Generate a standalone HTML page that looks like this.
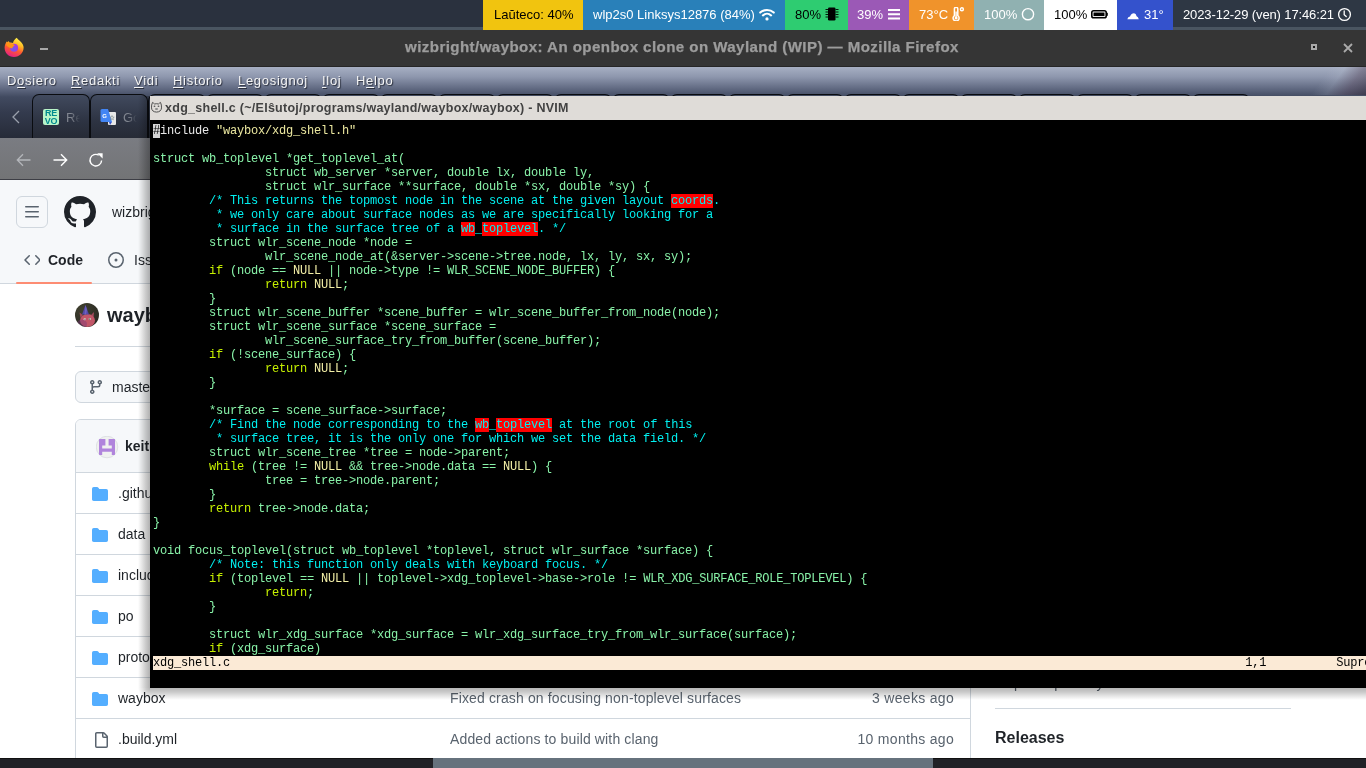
<!DOCTYPE html>
<html><head><meta charset="utf-8">
<style>
*{margin:0;padding:0;box-sizing:border-box}
html,body{width:1366px;height:768px;overflow:hidden;background:#2b3240;font-family:"Liberation Sans",sans-serif}
.a{position:absolute}
/* waybar */
#wb{left:0;top:0;width:1366px;height:30px;background:#2a313e;border-bottom:3px solid #4a5561}
.m{position:absolute;top:0;height:30px;font-size:13px;line-height:30px;white-space:nowrap}
/* firefox */
#fftitle{left:0;top:30px;width:1366px;height:37px;background:#353535;border-bottom:1px solid #262626}
#menubar{left:0;top:67px;width:1366px;height:71px;background:linear-gradient(#a7afc3 0px,#8d96ad 10px,#5f6880 22px,#414a60 30px,#343b4e 45px,#262b38 71px)}
.menu{position:absolute;top:73px;font-size:13px;letter-spacing:0.7px;color:#f4f4f4;text-shadow:1px 1px 1px #2a2f3c;white-space:nowrap}
.menu u{text-decoration:underline;text-underline-offset:2px}
.tab{position:absolute;top:94px;height:45px;width:58px;border:1.5px solid #0a0c10;border-bottom:none;border-radius:7px 7px 0 0;background:linear-gradient(#414a5e,#2d3342 60%,#262a35)}
#navbar{left:0;top:138px;width:1366px;height:42px;background:linear-gradient(#7a7c82,#737476);border-bottom:1px solid #3d3e45}
#page{left:0;top:180px;width:1366px;height:578px;background:#ffffff;overflow:hidden}
#bottom{left:0;top:758px;width:1366px;height:10px;background:#212227;border-top:1px solid #111}
/* terminal */
#term{left:150px;top:96px;width:1230px;height:592px;background:#000;}
#ttitle{left:0;top:0;width:1230px;height:24px;background:#dfdcd8}
#code{left:3px;top:28px;font-family:"Liberation Mono",monospace;font-size:12px;line-height:14px;letter-spacing:-0.2px;white-space:pre;color:#88f2a8}
.k{color:#c6f000}
.n{color:#f2eea6}
.c{color:#00f0f0}
.s{color:#ece8a0}
.w{color:#e8e8e8}
.r{background:#ff0000}
.cur{background:#d4d4d4;color:#000}
.row{position:absolute;left:0;width:894px;height:41px;border-top:1px solid #d0d7de}
.fn{left:42px;top:11px;font-size:14px;line-height:18px;color:#1f2328;white-space:nowrap}
.msg{left:374px;top:11px;font-size:14px;line-height:18px;color:#59636e;white-space:nowrap;letter-spacing:0.14px}
.age{right:16px;top:11px;font-size:14px;line-height:18px;color:#59636e;white-space:nowrap;letter-spacing:0.3px}
</style></head>
<body>
<div id="root" style="position:absolute;left:0;top:0;width:1366px;height:768px;will-change:transform;overflow:hidden">
<div id="wb" class="a">
<div class="m" style="left:483px;width:100px;background:#f1c40f;color:#000"><span class="a" style="left:11px">La&#365;teco: 40%</span></div>
<div class="m" style="left:583px;width:202px;background:#2980b9;color:#fff"><span class="a" style="left:10px">wlp2s0 Linksys12876 (84%)</span>
<svg class="a" style="left:176px;top:8px" width="16" height="13" viewBox="0 0 16 13"><path d="M1.2 4.6 A10 10 0 0 1 14.8 4.6" stroke="#fff" stroke-width="2.1" fill="none" stroke-linecap="round"/><path d="M3.9 7.4 A6 6 0 0 1 12.1 7.4" stroke="#fff" stroke-width="2.1" fill="none" stroke-linecap="round"/><circle cx="8" cy="10.9" r="1.6" fill="#fff"/></svg></div>
<div class="m" style="left:785px;width:63px;background:#2ecc71;color:#000"><span class="a" style="left:10px">80%</span>
<svg class="a" style="left:40px;top:7px" width="14" height="14" viewBox="0 0 14 14"><rect x="3" y="0.5" width="7.5" height="13" rx="1.3" fill="#000"/><path d="M0.5 2.5h2.5M0.5 5h2.5M0.5 7.5h2.5M0.5 10h2.5M10.5 2.5h3M10.5 5h3M10.5 7.5h3M10.5 10h3" stroke="#000" stroke-width="0.9"/></svg></div>
<div class="m" style="left:848px;width:61px;background:#9b59b6;color:#fff"><span class="a" style="left:9px">39%</span>
<svg class="a" style="left:40px;top:9px" width="12" height="11" viewBox="0 0 12 11"><path d="M0 1h12M0 5.3h12M0 9.6h12" stroke="#fff" stroke-width="2"/></svg></div>
<div class="m" style="left:909px;width:65px;background:#f0932b;color:#fff"><span class="a" style="left:10px">73&#176;C</span>
<svg class="a" style="left:41px;top:7px" width="15" height="14" viewBox="0 0 15 14"><path d="M4.4 2a1.7 1.7 0 0 1 3.4 0v6.6a3 3 0 1 1-3.4 0z" stroke="#fff" stroke-width="1.5" fill="none"/><circle cx="6.1" cy="10.9" r="1.5" fill="#fff"/><rect x="5.4" y="4.5" width="1.4" height="6" fill="#fff"/><circle cx="11.9" cy="2.3" r="1.5" stroke="#fff" stroke-width="1.4" fill="none"/></svg></div>
<div class="m" style="left:974px;width:70px;background:#90b1b1;color:#fff"><span class="a" style="left:10px">100%</span>
<svg class="a" style="left:47px;top:7px" width="14" height="14" viewBox="0 0 14 14"><circle cx="7" cy="7.2" r="5.6" stroke="#fff" stroke-width="1.4" fill="none"/></svg></div>
<div class="m" style="left:1044px;width:73px;background:#ffffff;color:#000"><span class="a" style="left:10px">100%</span>
<svg class="a" style="left:47px;top:10px" width="17" height="9" viewBox="0 0 17 9"><rect x="0.8" y="0.8" width="14.4" height="7" rx="1.8" stroke="#000" stroke-width="1.6" fill="none"/><rect x="2.5" y="2.5" width="11" height="3.6" fill="#000"/><rect x="15.4" y="2.8" width="1.4" height="3" fill="#000"/></svg></div>
<div class="m" style="left:1117px;width:56px;background:#3452cc;color:#fff">
<svg class="a" style="left:10px;top:12px" width="12" height="8" viewBox="0 0 12 8"><path d="M0.3 7.2Q1 4.8 3 4.6 4.5 1.2 7 1.3 9 1.5 9.6 4.2 11.2 4.6 11.8 7.2z" fill="#fff"/></svg>
<span class="a" style="left:27px">31&#176;</span></div>
<div class="m" style="left:1173px;width:193px;height:27px;background:#2e3744;color:#fff"><span class="a" style="left:10px;letter-spacing:-0.12px">2023-12-29 (ven) 17:46:21</span>
<svg class="a" style="left:164px;top:7px" width="15" height="15" viewBox="0 0 15 15"><circle cx="7.5" cy="7.5" r="5.9" stroke="#fff" stroke-width="1.3" fill="none"/><path d="M7.2 3.9v3.8l2 1.8" stroke="#fff" stroke-width="1.3" fill="none" stroke-linecap="round"/></svg></div>
</div>

<div id="fftitle" class="a">
<svg class="a" style="left:4px;top:7px" width="20" height="21" viewBox="0 0 20 21">
<defs><linearGradient id="fg1" x1="0.75" y1="0.05" x2="0.35" y2="1"><stop offset="0" stop-color="#fff04a"/><stop offset="0.3" stop-color="#ffbd24"/><stop offset="0.6" stop-color="#ff5a30"/><stop offset="1" stop-color="#e51e86"/></linearGradient>
<radialGradient id="fg2" cx="0.4" cy="0.65" r="0.6"><stop offset="0" stop-color="#6d5cf0"/><stop offset="1" stop-color="#a838e0"/></radialGradient></defs>
<path d="M12.7 0.7 C14 3 18.5 4.5 19.5 9.5 C20.3 15 16 20 10 20 C4.5 20 0.6 16 0.6 10.5 C0.6 8 1.8 5.6 3 4.2 L3.6 5.5 L4.6 4 L5.6 5.6 C6.8 5.3 8 5.5 9 6 C9.5 3.5 11 2 12.7 0.7z" fill="url(#fg1)"/>
<circle cx="10.1" cy="10.8" r="4" fill="url(#fg2)"/>
<path d="M2.6 5 C5 6 8 6.2 11 8.2 C9.6 8.8 8.6 9.8 8.3 11.4 C6 11.2 4 10 2.4 8.2z" fill="#ff9414"/>
</svg>
<div class="a" style="left:40px;top:18px;width:8px;height:2px;background:#a8a8a8"></div>
<div class="a" id="fft" style="left:405px;top:9px;font-weight:bold;font-size:14px;color:#9c9c9c;white-space:nowrap;letter-spacing:0.4px;transform:scaleX(1.077);transform-origin:0 0;-webkit-text-stroke:0.25px #9c9c9c">wizbright/waybox: An openbox clone on Wayland (WIP) &#8212; Mozilla Firefox</div>
<div class="a" style="left:1311px;top:14px;width:6px;height:6px;border:2px solid #aaa;background:#1a1a1a"></div>
<svg class="a" style="left:1343px;top:13px" width="10" height="10" viewBox="0 0 10 10"><path d="M1 1L9 9M9 1L1 9" stroke="#aaa" stroke-width="1.8"/></svg>
</div>
<div id="menubar" class="a">
<div class="a" style="left:1290px;top:0;width:76px;height:28px;background:linear-gradient(125deg,rgba(0,0,0,0) 42%,rgba(200,205,220,.14) 58%,rgba(85,68,88,.42) 78%,rgba(50,40,55,.52) 100%)"></div>
</div>
<div class="menu" style="left:7px">D<u>o</u>siero</div>
<div class="menu" style="left:71px"><u>R</u>edakti</div>
<div class="menu" style="left:134px"><u>V</u>idi</div>
<div class="menu" style="left:173px"><u>H</u>istorio</div>
<div class="menu" style="left:238px"><u>L</u>egosignoj</div>
<div class="menu" style="left:322px"><u>I</u>loj</div>
<div class="menu" style="left:356px">H<u>e</u>lpo</div>
<svg class="a" style="left:11px;top:110px" width="10" height="14" viewBox="0 0 10 14"><path d="M8 1L2 7l6 6" stroke="#9aa0ac" stroke-width="1.3" fill="none"/></svg>
<div class="tab" style="left:32px"></div><div class="tab" style="left:90px"></div><div class="tab" style="left:148px"></div><div class="tab" style="left:206px"></div><div class="tab" style="left:264px"></div><div class="tab" style="left:322px"></div><div class="tab" style="left:380px"></div><div class="tab" style="left:438px"></div><div class="tab" style="left:496px"></div><div class="tab" style="left:554px"></div><div class="tab" style="left:612px"></div><div class="tab" style="left:670px"></div><div class="tab" style="left:728px"></div><div class="tab" style="left:786px"></div><div class="tab" style="left:844px"></div><div class="tab" style="left:902px"></div><div class="tab" style="left:960px"></div><div class="tab" style="left:1018px"></div><div class="tab" style="left:1076px"></div><div class="tab" style="left:1134px"></div><div class="tab" style="left:1192px"></div>
<div class="a" style="left:43px;top:109px;width:16px;height:16px;background:#b9f5c9;border-radius:2px;font:bold 9px/8px 'Liberation Sans',sans-serif;color:#008a8f;text-align:center;letter-spacing:-0.3px;overflow:hidden">RE<br>VO</div>
<div class="a" style="left:66px;top:109px;font-size:13px;line-height:17px;color:#80858f;width:14px;overflow:hidden;white-space:nowrap;-webkit-mask-image:linear-gradient(90deg,#000 35%,transparent 100%)">Re</div>
<svg class="a" style="left:100px;top:109px" width="17" height="17" viewBox="0 0 17 17"><rect x="8" y="3" width="8" height="13" rx="1" fill="#e8e8e8"/><path d="M0.5 1.5Q0.5 0 2 0h6l4 13H2Q0.5 13 0.5 11.5z" fill="#4285f4"/><path d="M9 13l3 0-2 3z" fill="#3a55c8"/><text x="2.2" y="8.5" font-family="Liberation Sans" font-weight="bold" font-size="6" fill="#fff">G</text><path d="M12 6.5l.6 1.6 1.6.1-1.3 1 .5 1.6-1.4-.9-1.4.9.5-1.6-1.3-1 1.6-.1z" fill="none" stroke="#7a8a8a" stroke-width=".6"/></svg>
<div class="a" style="left:123px;top:109px;font-size:13px;line-height:17px;color:#80858f;width:14px;overflow:hidden;white-space:nowrap;-webkit-mask-image:linear-gradient(90deg,#000 35%,transparent 100%)">Go</div>
<div id="navbar" class="a">
<svg class="a" style="left:16px;top:15px" width="16" height="14" viewBox="0 0 16 14"><path d="M14.5 7H1.5M7 1.2L1.3 7 7 12.8" stroke="#b4b6ba" stroke-width="1.3" fill="none"/></svg>
<svg class="a" style="left:52px;top:15px" width="16" height="14" viewBox="0 0 16 14"><path d="M1.5 7h13M9 1.2L14.7 7 9 12.8" stroke="#fff" stroke-width="1.4" fill="none"/></svg>
<svg class="a" style="left:88px;top:14px" width="16" height="16" viewBox="0 0 16 16"><path d="M13.6 8.5A5.8 5.8 0 1 1 10.8 3.2" stroke="#fff" stroke-width="1.4" fill="none"/><path d="M9.2 1.2L14.6 1.2 14.6 6.6z" fill="#fff"/></svg>
</div>
<div id="page" class="a">
<div class="a" style="left:0;top:0;width:1366px;height:104px;background:#f6f8fa;border-bottom:1px solid #d0d7de"></div>
<div class="a" style="left:16px;top:16px;width:32px;height:32px;border:1px solid #d0d7de;border-radius:6px"></div>
<svg class="a" style="left:24px;top:24px" width="16" height="16" viewBox="0 0 16 16"><path fill="#59636e" d="M1 2.75A.75.75 0 0 1 1.75 2h12.5a.75.75 0 0 1 0 1.5H1.75A.75.75 0 0 1 1 2.75Zm0 5A.75.75 0 0 1 1.75 7h12.5a.75.75 0 0 1 0 1.5H1.75A.75.75 0 0 1 1 7.75ZM1.75 12h12.5a.75.75 0 0 1 0 1.5H1.75a.75.75 0 0 1 0-1.5Z"/></svg>
<svg class="a" style="left:64px;top:16px" width="32" height="32" viewBox="0 0 16 16"><path fill="#1f2328" d="M8 0c4.42 0 8 3.58 8 8a8.013 8.013 0 0 1-5.45 7.59c-.4.08-.55-.17-.55-.38 0-.27.01-1.13.01-2.2 0-.75-.25-1.23-.54-1.48 1.78-.2 3.65-.88 3.65-3.95 0-.88-.31-1.59-.82-2.15.08-.2.36-1.02-.08-2.12 0 0-.67-.22-2.2.82-.64-.18-1.32-.27-2-.27-.68 0-1.36.09-2 .27-1.53-1.03-2.2-.82-2.2-.82-.44 1.1-.16 1.92-.08 2.12-.51.56-.82 1.28-.82 2.15 0 3.06 1.86 3.75 3.64 3.95-.23.2-.44.55-.51 1.07-.46.21-1.61.55-2.33-.66-.15-.24-.6-.83-1.23-.82-.67.01-.27.38.01.53.34.19.73.9.82 1.13.16.45.68 1.31 2.69.94 0 .67.01 1.3.01 1.49 0 .21-.15.45-.55.38A7.995 7.995 0 0 1 0 8c0-4.42 3.58-8 8-8Z"/></svg>
<div class="a" style="left:112px;top:22px;font-size:14px;line-height:20px;color:#1f2328;white-space:nowrap">wizbright / waybox</div>
<svg class="a" style="left:24px;top:72px" width="16" height="16" viewBox="0 0 16 16"><path fill="#59636e" d="M4.72 3.22a.75.75 0 0 1 1.06 1.06L2.06 8l3.72 3.72a.75.75 0 1 1-1.06 1.06L.47 8.53a.75.75 0 0 1 0-1.06Zm6.56 0a.75.75 0 0 1 1.06 0l4.25 4.25a.75.75 0 0 1 0 1.06l-4.25 4.25a.75.75 0 0 1-1.06-1.06L14.94 8l-3.72-3.72a.75.75 0 0 1 0-1.06Z"/></svg>
<div class="a" style="left:48px;top:71px;font-weight:bold;font-size:14px;line-height:18px;color:#1f2328">Code</div>
<div class="a" style="left:16px;top:102px;width:76px;height:2px;background:#fd8c73;border-radius:1px"></div>
<svg class="a" style="left:108px;top:72px" width="16" height="16" viewBox="0 0 16 16"><path fill="#59636e" d="M8 9.5a1.5 1.5 0 1 0 0-3 1.5 1.5 0 0 0 0 3Z"/><path fill="#59636e" d="M8 0a8 8 0 1 1 0 16A8 8 0 0 1 8 0ZM1.5 8a6.5 6.5 0 1 0 13 0 6.5 6.5 0 0 0-13 0Z"/></svg>
<div class="a" style="left:134px;top:71px;font-size:14px;line-height:18px;color:#1f2328">Issues</div>
<svg class="a" style="left:75px;top:123px" width="24" height="24" viewBox="0 0 24 24"><defs><clipPath id="avc"><circle cx="12" cy="12" r="12"/></clipPath><radialGradient id="avg" cx="0.3" cy="0.3" r="0.8"><stop offset="0" stop-color="#40402f"/><stop offset="1" stop-color="#2a2a22"/></radialGradient></defs><g clip-path="url(#avc)"><rect width="24" height="24" fill="url(#avg)"/><path d="M4.5 9.5 L8 12 L5.5 15z M19 9 L16 12 L18.5 15z" fill="#a04a5a"/><ellipse cx="12.5" cy="17.5" rx="7.5" ry="6.5" fill="#c25668"/><ellipse cx="7" cy="21" rx="5" ry="4.5" fill="#7c3a78" opacity=".45"/><path d="M10.5 2 L14 11.5 L7 11.5z" fill="#5548a8"/><path d="M10.5 2 L12 7 L11 11.5 L9.5 11.5z" fill="#6d62c0"/><ellipse cx="9.8" cy="16.2" rx="1.3" ry="1" fill="#e8e4d8"/><ellipse cx="14.8" cy="16" rx="1.2" ry="1" fill="#c8dcc0"/><circle cx="10" cy="16.3" r=".5" fill="#222"/><circle cx="14.6" cy="16.1" r=".5" fill="#222"/></g></svg>
<div class="a" style="left:107px;top:122px;font-weight:bold;font-size:20px;line-height:26px;color:#1f2328">waybox</div>
<div class="a" style="left:75px;top:166px;width:1216px;height:1px;background:#d0d7de"></div>
<div class="a" style="left:75px;top:191px;width:110px;height:32px;border:1px solid #d0d7de;border-radius:6px;background:#f6f8fa"></div>
<svg class="a" style="left:88px;top:199px" width="16" height="16" viewBox="0 0 16 16"><path fill="#59636e" d="M9.5 3.25a2.25 2.25 0 1 1 3 2.122V6A2.5 2.5 0 0 1 10 8.5H6a1 1 0 0 0-1 1v1.128a2.251 2.251 0 1 1-1.5 0V5.372a2.25 2.25 0 1 1 1.5 0v1.836A2.493 2.493 0 0 1 6 7h4a1 1 0 0 0 1-1v-.628A2.25 2.25 0 0 1 9.5 3.25Zm-6 0a.75.75 0 1 0 1.5 0 .75.75 0 0 0-1.5 0Zm8.25-.75a.75.75 0 1 0 0 1.5.75.75 0 0 0 0-1.5ZM4.25 12a.75.75 0 1 0 0 1.5.75.75 0 0 0 0-1.5Z"/></svg>
<div class="a" style="left:112px;top:198px;font-size:14px;line-height:18px;color:#1f2328">master</div>
<div class="a" style="left:75px;top:239px;width:896px;height:340px;border:1px solid #d0d7de;border-radius:6px 6px 0 0;overflow:hidden">
 <div class="a" style="left:0;top:0;width:894px;height:53px;background:#f6f8fa;border-bottom:1px solid #d0d7de"></div>
 <svg class="a" style="left:20px;top:16px" width="23" height="23" viewBox="0 0 23 23"><defs><clipPath id="kc"><circle cx="11" cy="11" r="11"/></clipPath></defs><circle cx="11" cy="11" r="10.8" fill="#f0f1f0" stroke="#d0d4d8" stroke-width="0.6"/><g clip-path="url(#kc)" fill="#b084dc"><path d="M3 3h6.4v6.4H6.2v3.2h9.6V9.4h-3.2V3H19v16h-3.2v-3.2H6.2V19H3z"/></g></svg>
 <div class="a" style="left:49px;top:17px;font-weight:bold;font-size:14px;line-height:18px;color:#1f2328">keithbowes</div>
 <div class="row" style="top:52px"><svg class="a" style="left:16px;top:13px" width="16" height="16" viewBox="0 0 16 16"><path fill="#54aeff" d="M1.75 1A1.75 1.75 0 0 0 0 2.75v10.5C0 14.216.784 15 1.75 15h12.5A1.75 1.75 0 0 0 16 13.25v-8.5A1.75 1.75 0 0 0 14.25 3H7.5a.25.25 0 0 1-.2-.1l-.9-1.2C6.07 1.26 5.55 1 5 1H1.75Z"/></svg><span class="a fn">.github</span><span class="a msg"></span><span class="a age"></span></div>
<div class="row" style="top:93px"><svg class="a" style="left:16px;top:13px" width="16" height="16" viewBox="0 0 16 16"><path fill="#54aeff" d="M1.75 1A1.75 1.75 0 0 0 0 2.75v10.5C0 14.216.784 15 1.75 15h12.5A1.75 1.75 0 0 0 16 13.25v-8.5A1.75 1.75 0 0 0 14.25 3H7.5a.25.25 0 0 1-.2-.1l-.9-1.2C6.07 1.26 5.55 1 5 1H1.75Z"/></svg><span class="a fn">data</span><span class="a msg"></span><span class="a age"></span></div>
<div class="row" style="top:134px"><svg class="a" style="left:16px;top:13px" width="16" height="16" viewBox="0 0 16 16"><path fill="#54aeff" d="M1.75 1A1.75 1.75 0 0 0 0 2.75v10.5C0 14.216.784 15 1.75 15h12.5A1.75 1.75 0 0 0 16 13.25v-8.5A1.75 1.75 0 0 0 14.25 3H7.5a.25.25 0 0 1-.2-.1l-.9-1.2C6.07 1.26 5.55 1 5 1H1.75Z"/></svg><span class="a fn">include</span><span class="a msg"></span><span class="a age"></span></div>
<div class="row" style="top:175px"><svg class="a" style="left:16px;top:13px" width="16" height="16" viewBox="0 0 16 16"><path fill="#54aeff" d="M1.75 1A1.75 1.75 0 0 0 0 2.75v10.5C0 14.216.784 15 1.75 15h12.5A1.75 1.75 0 0 0 16 13.25v-8.5A1.75 1.75 0 0 0 14.25 3H7.5a.25.25 0 0 1-.2-.1l-.9-1.2C6.07 1.26 5.55 1 5 1H1.75Z"/></svg><span class="a fn">po</span><span class="a msg"></span><span class="a age"></span></div>
<div class="row" style="top:216px"><svg class="a" style="left:16px;top:13px" width="16" height="16" viewBox="0 0 16 16"><path fill="#54aeff" d="M1.75 1A1.75 1.75 0 0 0 0 2.75v10.5C0 14.216.784 15 1.75 15h12.5A1.75 1.75 0 0 0 16 13.25v-8.5A1.75 1.75 0 0 0 14.25 3H7.5a.25.25 0 0 1-.2-.1l-.9-1.2C6.07 1.26 5.55 1 5 1H1.75Z"/></svg><span class="a fn">protocol</span><span class="a msg"></span><span class="a age"></span></div>
<div class="row" style="top:257px"><svg class="a" style="left:16px;top:13px" width="16" height="16" viewBox="0 0 16 16"><path fill="#54aeff" d="M1.75 1A1.75 1.75 0 0 0 0 2.75v10.5C0 14.216.784 15 1.75 15h12.5A1.75 1.75 0 0 0 16 13.25v-8.5A1.75 1.75 0 0 0 14.25 3H7.5a.25.25 0 0 1-.2-.1l-.9-1.2C6.07 1.26 5.55 1 5 1H1.75Z"/></svg><span class="a fn">waybox</span><span class="a msg">Fixed crash on focusing non-toplevel surfaces</span><span class="a age">3 weeks ago</span></div>
<div class="row" style="top:298px"><svg class="a" style="left:17px;top:13px" width="16" height="16" viewBox="0 0 16 16"><path fill="#59636e" d="M2 1.75C2 .784 2.784 0 3.75 0h6.586c.464 0 .909.184 1.237.513l2.914 2.914c.329.328.513.773.513 1.237v9.586A1.75 1.75 0 0 1 13.25 16h-9.5A1.75 1.75 0 0 1 2 14.25Zm1.75-.25a.25.25 0 0 0-.25.25v12.5c0 .138.112.25.25.25h9.5a.25.25 0 0 0 .25-.25V6h-2.75A1.75 1.75 0 0 1 9 4.25V1.5Zm6.75.062V4.25c0 .138.112.25.25.25h2.688l-.011-.013-2.914-2.914-.013-.011Z"/></svg><span class="a fn">.build.yml</span><span class="a msg">Added actions to build with clang</span><span class="a age">10 months ago</span></div>

</div>
<div class="a" style="left:996px;top:495px;font-size:14px;line-height:16px;color:#59636e">Report repository</div>
<div class="a" style="left:995px;top:528px;width:296px;height:1px;background:#d0d7de"></div>
<div class="a" style="left:995px;top:548px;font-weight:bold;font-size:16px;line-height:20px;color:#1f2328">Releases</div>
</div>
<div id="bottom" class="a"><div class="a" style="left:433px;top:-1px;width:500px;height:11px;background:#66727d"></div></div>

<div class="a" style="left:138px;top:96px;width:12px;height:592px;background:linear-gradient(90deg,rgba(0,0,0,0) 0,rgba(0,0,0,.1) 4px,rgba(0,0,0,.21) 8px,rgba(0,0,0,.31) 12px)"></div>
<div class="a" style="left:150px;top:688px;width:1216px;height:12px;background:linear-gradient(rgba(0,0,0,.29) 0,rgba(0,0,0,.21) 4px,rgba(0,0,0,.1) 8px,rgba(0,0,0,0) 12px)"></div>
<div class="a" style="left:138px;top:688px;width:12px;height:12px;background:radial-gradient(circle at 100% 0,rgba(0,0,0,.29) 0,rgba(0,0,0,.2) 4px,rgba(0,0,0,.09) 8px,rgba(0,0,0,0) 12px)"></div>
<div id="term" class="a">
  <div id="ttitle" class="a">
<svg class="a" style="left:1px;top:5px" width="12" height="12" viewBox="0 0 12 12"><path d="M1.5 1.4 Q2.9 2.3 3.6 3 Q5.5 2.4 7.4 3 Q8.1 2.3 9.5 1.4 Q10.7 4 10.5 6.9 Q10.1 10.9 5.5 11.1 Q.9 10.9 .5 6.9 Q.3 4 1.5 1.4z" fill="none" stroke="#505050" stroke-width="1"/><ellipse cx="3.5" cy="5.3" rx=".9" ry=".8" fill="#555"/><ellipse cx="7.5" cy="5.3" rx=".9" ry=".8" fill="#555"/><ellipse cx="5.5" cy="8" rx="1.6" ry="1.1" fill="#8a8a8a"/></svg>
<div class="a" style="left:15px;top:4px;font-weight:bold;font-size:12.5px;line-height:16px;color:#424242;white-space:nowrap;letter-spacing:0.27px">xdg_shell.c (~/El&#349;utoj/programs/wayland/waybox/waybox) - NVIM</div>
</div>
<div id="status" class="a" style="left:3px;top:560px;width:1240px;height:14px;background:#fbead6;color:#000;font-family:'Liberation Mono',monospace;font-size:12px;line-height:14px;letter-spacing:-0.2px;white-space:pre">xdg_shell.c                                                                                                                                                 1,1          Supro</div>
  <div id="code" class="a"><span class="cur">#</span><span class="w">include</span> <span class="s">"waybox/xdg_shell.h"</span>

struct wb_toplevel *get_toplevel_at(
                struct wb_server *server, double lx, double ly,
                struct wlr_surface **surface, double *sx, double *sy) {
        <span class="c">/* This returns the topmost node in the scene at the given layout <span class="r">coords</span>.</span>
         <span class="c">* we only care about surface nodes as we are specifically looking for a</span>
         <span class="c">* surface in the surface tree of a <span class="r">wb</span>_<span class="r">toplevel</span>. */</span>
        struct wlr_scene_node *node =
                wlr_scene_node_at(&amp;server-&gt;scene-&gt;tree.node, lx, ly, sx, sy);
        <span class="k">if</span> (node == <span class="n">NULL</span> || node-&gt;type != WLR_SCENE_NODE_BUFFER) {
                <span class="k">return</span> <span class="n">NULL</span>;
        }
        struct wlr_scene_buffer *scene_buffer = wlr_scene_buffer_from_node(node);
        struct wlr_scene_surface *scene_surface =
                wlr_scene_surface_try_from_buffer(scene_buffer);
        <span class="k">if</span> (!scene_surface) {
                <span class="k">return</span> <span class="n">NULL</span>;
        }

        *surface = scene_surface-&gt;surface;
        <span class="c">/* Find the node corresponding to the <span class="r">wb</span>_<span class="r">toplevel</span> at the root of this</span>
         <span class="c">* surface tree, it is the only one for which we set the data field. */</span>
        struct wlr_scene_tree *tree = node-&gt;parent;
        <span class="k">while</span> (tree != <span class="n">NULL</span> &amp;&amp; tree-&gt;node.data == <span class="n">NULL</span>) {
                tree = tree-&gt;node.parent;
        }
        <span class="k">return</span> tree-&gt;node.data;
}

void focus_toplevel(struct wb_toplevel *toplevel, struct wlr_surface *surface) {
        <span class="c">/* Note: this function only deals with keyboard focus. */</span>
        <span class="k">if</span> (toplevel == <span class="n">NULL</span> || toplevel-&gt;xdg_toplevel-&gt;base-&gt;role != WLR_XDG_SURFACE_ROLE_TOPLEVEL) {
                <span class="k">return</span>;
        }

        struct wlr_xdg_surface *xdg_surface = wlr_xdg_surface_try_from_wlr_surface(surface);
        <span class="k">if</span> (xdg_surface)</div>
</div>
</div>
</body></html>
